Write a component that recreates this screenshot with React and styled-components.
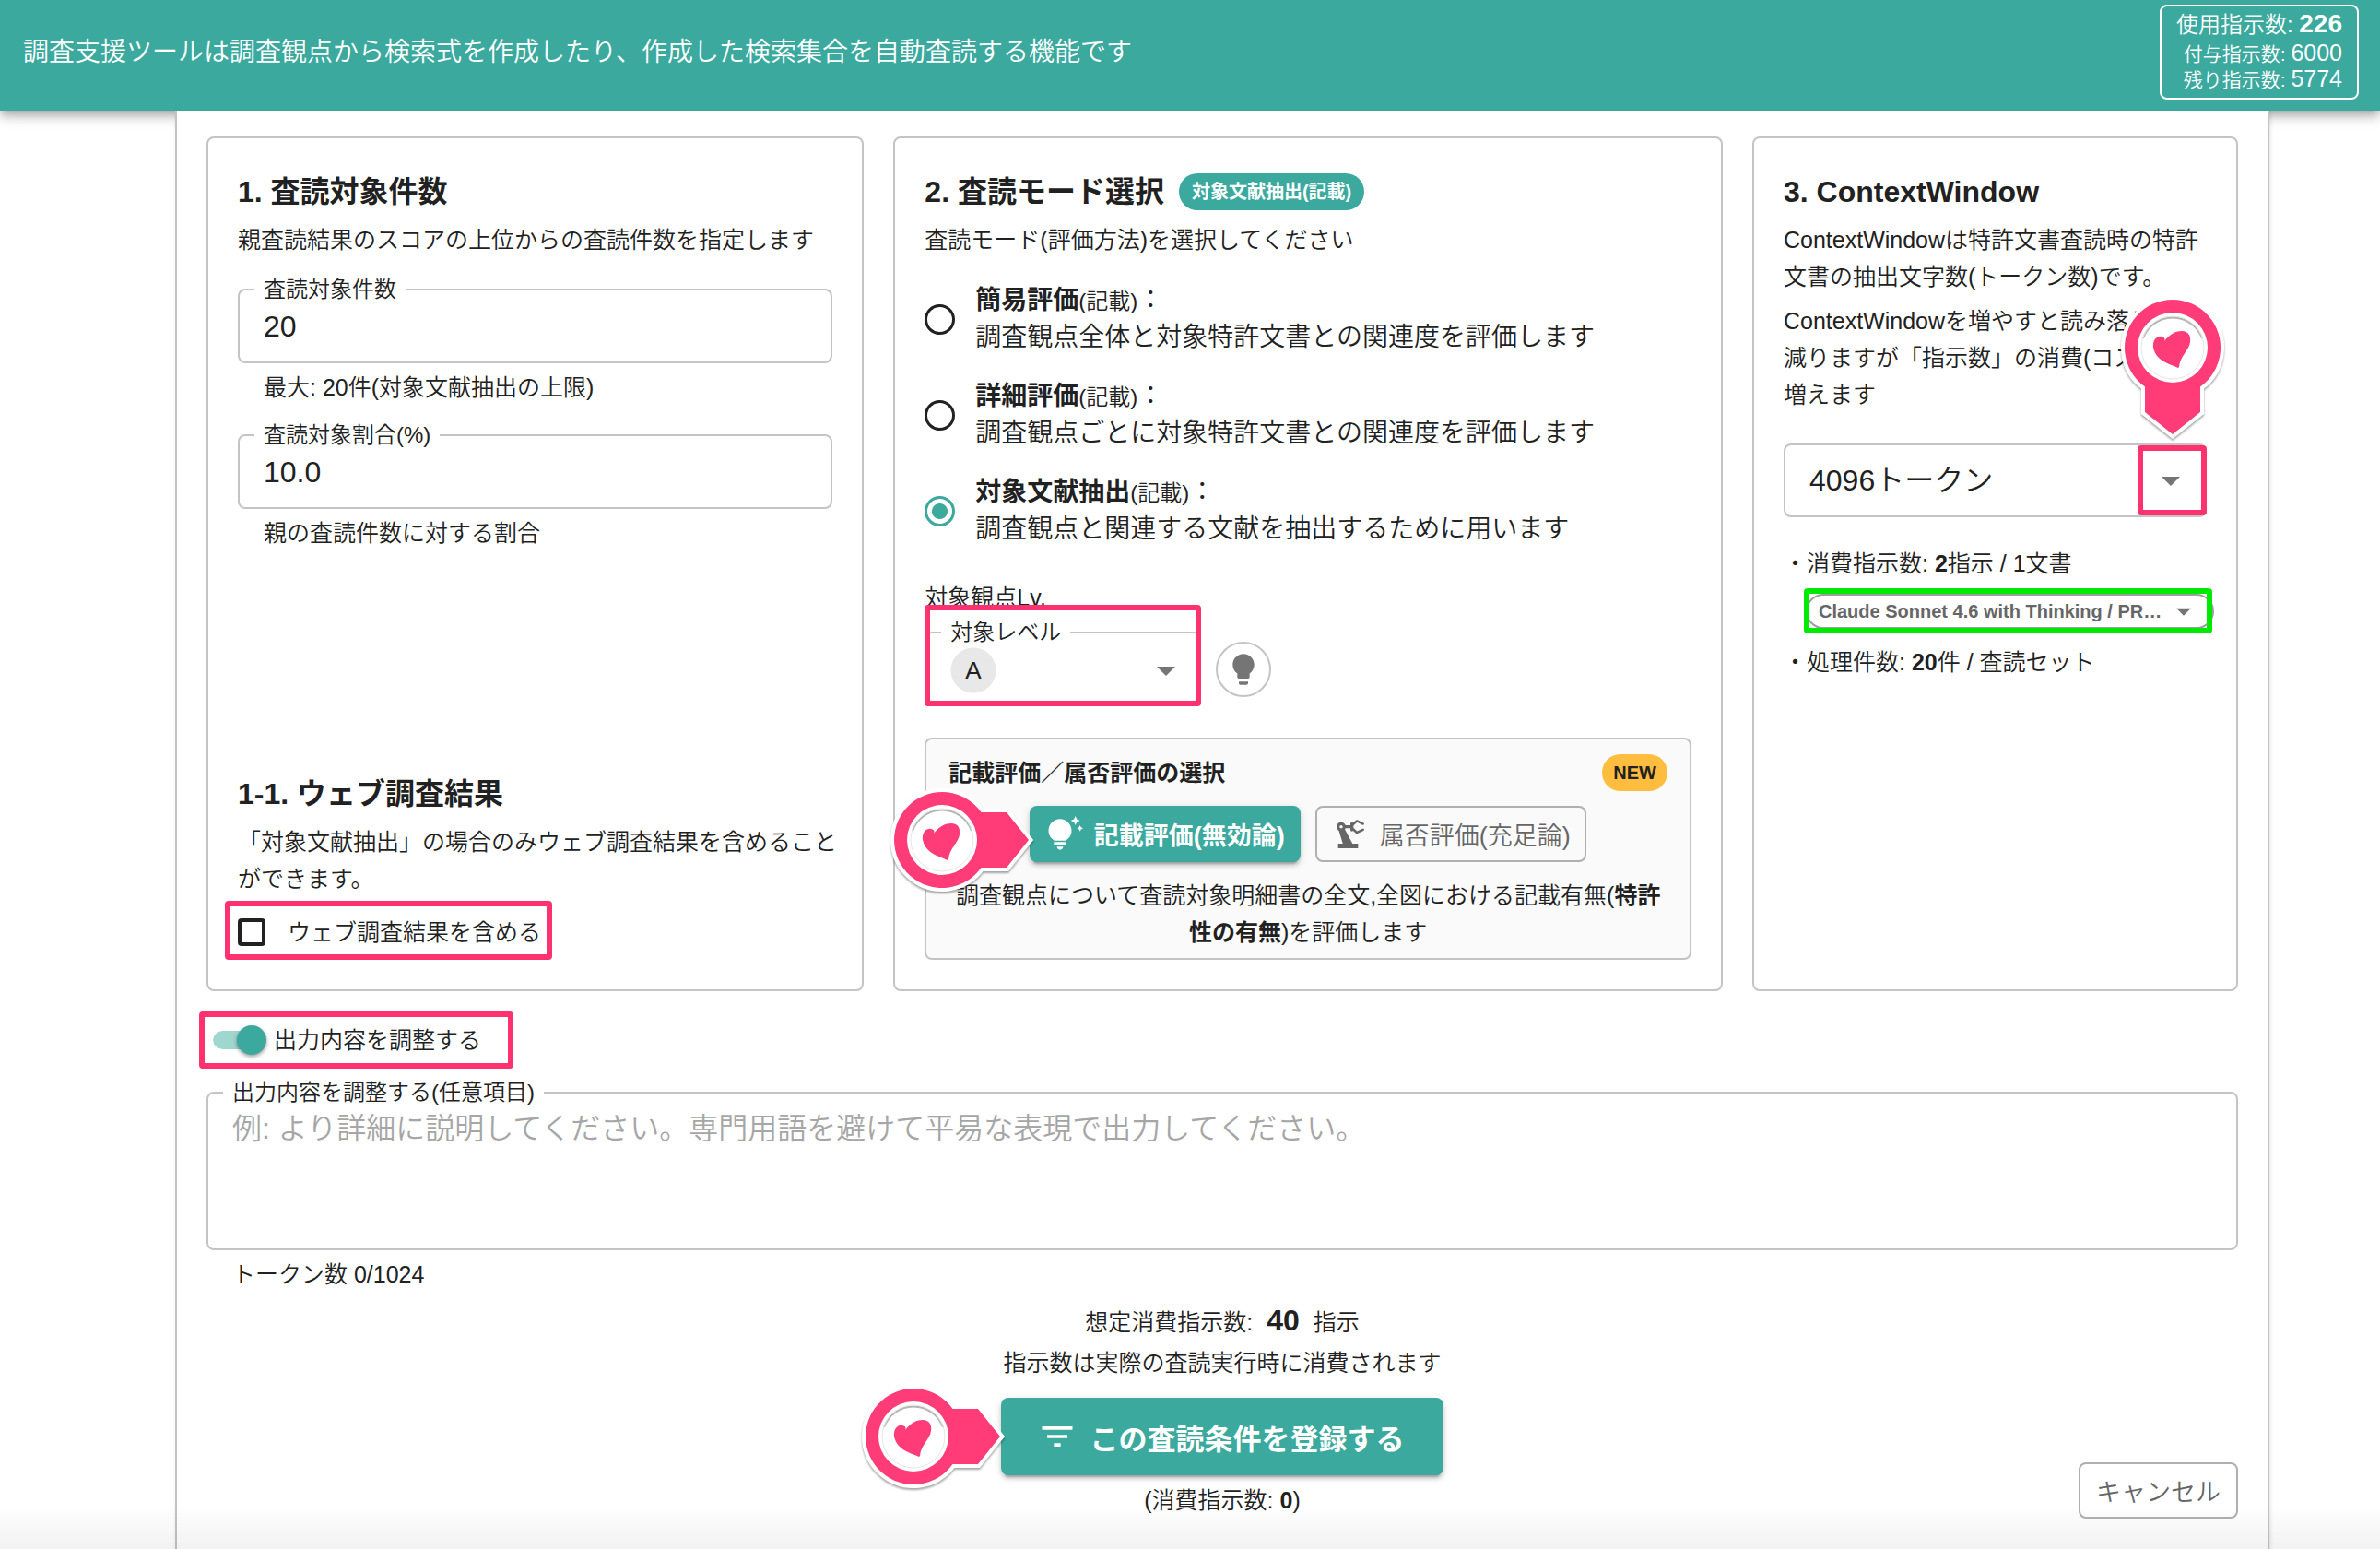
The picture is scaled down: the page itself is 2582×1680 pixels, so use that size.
import React, { useState } from "react";
import styled, { createGlobalStyle, css } from "styled-components";
import {
  MdArrowDropDown,
  MdFilterList,
  MdLightbulb,
  MdPrecisionManufacturing,
  MdTipsAndUpdates,
} from "react-icons/md";

const teal = "#3ba99e";
const pink = "#ff3270";
const ink = "#212121";
const line = "#c4c4c4";

const GlobalStyle = createGlobalStyle`
  * {
    box-sizing: border-box;
  }
  body {
    margin: 0;
    background: #fff;
    color: ${ink};
    font-family: "Liberation Sans", "Noto Sans CJK JP", sans-serif;
    font-size: 25px;
    font-weight: 350;
    line-height: 40px;
  }
  button, input, select, textarea {
    font-family: inherit;
    font-weight: inherit;
    color: inherit;
  }
  b {
    font-weight: 700;
  }
`;

const Header = styled.header`
  display: flex;
  justify-content: space-between;
  align-items: flex-start;
  height: 120px;
  padding: 5px 23px 0 25px;
  background: ${teal};
  color: #fff;
  box-shadow: 0 4px 8px -2px rgba(0, 0, 0, 0.2), 0 8px 10px rgba(0, 0, 0, 0.14),
    0 2px 20px rgba(0, 0, 0, 0.12);
`;

const Lead = styled.p`
  margin: 32px 0 0;
  font-size: 28px;
`;

const Usage = styled.div`
  padding: 2px 16px 6px;
  border: 2px solid #fff;
  border-radius: 8px;
  text-align: right;
  font-size: 24px;
  line-height: 34px;
  b {
    font-size: 28px;
  }
`;

const UsageSub = styled.div`
  font-size: 21px;
  line-height: 26px;
  span {
    font-size: 25px;
  }
`;

const Shell = styled.main`
  min-height: calc(100vh - 120px);
  margin: 0 120px 0 190px;
  padding: 28px 32px 28px;
  border: solid ${line};
  border-width: 0 2px;
  background: #fff;
  box-shadow: 1px 2px 4px rgba(0, 0, 0, 0.12);
`;

const BottomFade = styled.div`
  position: fixed;
  left: 0;
  right: 0;
  bottom: 0;
  height: 48px;
  pointer-events: none;
  background: linear-gradient(rgba(0, 0, 0, 0), rgba(0, 0, 0, 0.05));
`;

const Cards = styled.div`
  display: grid;
  grid-template-columns: repeat(12, minmax(0, 1fr));
  gap: 32px;
`;

const Card = styled.section`
  grid-column: span ${(p) => p.$span};
  display: flex;
  flex-direction: column;
  padding: 32px;
  border: 2px solid ${line};
  border-radius: 8px;
`;

const Title = styled.h2`
  display: flex;
  align-items: center;
  gap: 16px;
  margin: 0 0 6px;
  font-size: 32px;
  line-height: 52px;
`;

const Text = styled.p`
  margin: 0 0 8px;
  text-align: ${(p) => (p.$center ? "center" : "left")};
`;

const Badge = styled.span`
  padding: 0 ${(p) => (p.$amber ? 12 : 14)}px;
  border-radius: 20px;
  background: ${(p) => (p.$amber ? "#ffbd3f" : teal)};
  color: ${(p) => (p.$amber ? ink : "#fff")};
  font-size: 20px;
  font-weight: bold;
  line-height: 40px;
`;

const Outline = styled.fieldset`
  min-width: 0;
  margin: ${(p) => (p.$tight ? 0 : "10px 0 0")};
  padding: 0 16px ${(p) => (p.$tight ? 8 : 14)}px;
  border: 2px solid ${line};
  border-radius: 8px;
  legend {
    padding: 0 10px;
    font-size: 24px;
    line-height: 32px;
  }
`;

const TextInput = styled.input`
  display: block;
  width: 100%;
  height: 48px;
  padding: 0 10px;
  border: 0;
  outline: 0;
  background: none;
  font-size: 32px;
`;

const TextArea = styled.textarea`
  display: block;
  width: 100%;
  height: 145px;
  padding: 0 10px;
  border: 0;
  outline: 0;
  resize: none;
  background: none;
  font-size: 32px;
  line-height: 46px;
  &::placeholder {
    color: #a6a6a6;
  }
`;

const Helper = styled.p`
  margin: 6px 28px;
`;

const Lower = styled.div`
  margin-top: auto;
  margin-right: -8px;
`;

// coloured frame laid over a control to point it out
const Marked = styled.div`
  position: relative;
  &::after {
    content: "";
    position: absolute;
    inset: ${(p) => p.$inset};
    border: 6px solid ${(p) => p.$color || pink};
    border-radius: 4px;
    pointer-events: none;
  }
`;

const CheckRow = styled.label`
  display: flex;
  align-items: center;
  height: 60px;
  gap: 24px;
`;

const CheckBox = styled.input`
  appearance: none;
  width: 30px;
  height: 30px;
  margin: 0;
  border: 4px solid ${ink};
  border-radius: 4px;
  &:checked {
    background: ${teal};
  }
`;

const Fit = styled(Marked)`
  width: fit-content;
`;

const Options = styled.div`
  display: flex;
  flex-direction: column;
  gap: 24px;
  margin: 18px 0 34px;
`;

const Option = styled.label`
  display: flex;
  align-items: center;
  gap: 22px;
  font-size: 28px;
  small {
    font-size: 24px;
    line-height: 1;
  }
`;

const Radio = styled.input`
  appearance: none;
  flex: none;
  width: 33px;
  height: 33px;
  margin: 0;
  border: 3px solid ${ink};
  border-radius: 50%;
  &:checked {
    border-color: ${teal};
    background: radial-gradient(${teal} 8px, transparent 9px);
  }
`;

const LevelRow = styled.div`
  display: flex;
  align-items: flex-end;
  gap: 16px;
  margin: 2px 0 38px;
`;

const LevelBox = styled(Marked)`
  width: 300px;
`;

const SelectWrap = styled.div`
  position: relative;
  display: flex;
  align-items: center;
  svg {
    position: absolute;
    right: ${(p) => p.$arrow}px;
    color: #757575;
    pointer-events: none;
  }
`;

const selectBase = css`
  appearance: none;
  width: 100%;
  margin: 0;
  outline: 0;
  text-overflow: ellipsis;
`;

// round chip is drawn under the chosen level
const LevelSelect = styled.select`
  ${selectBase}
  height: 50px;
  padding: 0 26px;
  border: 0;
  background: radial-gradient(circle at 35px 25px, #e8e8e8 24px, transparent 25px);
  font-size: 26px;
`;

const TokenSelect = styled.select`
  ${selectBase}
  height: 80px;
  padding: 0 80px 0 26px;
  border: 2px solid ${line};
  border-radius: 8px;
  background: #fff;
  font-size: 32px;
`;

const ModelSelect = styled.select`
  ${selectBase}
  height: 38px;
  padding: 0 44px 0 12px;
  border: 2px solid #9e9e9e;
  border-radius: 19px;
  background: #fff;
  color: #666;
  font-size: 20px;
  font-weight: bold;
`;

const HintButton = styled.button`
  display: grid;
  place-items: center;
  width: 60px;
  height: 60px;
  margin-bottom: 6px;
  padding: 0;
  border: 2px solid ${line};
  border-radius: 50%;
  background: #fff;
  color: #757575;
`;

const Panel = styled.div`
  padding: 16px 24px 0;
  border: 2px solid ${line};
  border-radius: 8px;
  background: #fafafa;
`;

const PanelHead = styled.div`
  display: flex;
  justify-content: space-between;
  font-weight: bold;
`;

const Choices = styled.div`
  display: flex;
  justify-content: center;
  gap: 16px;
  margin: 16px 0;
`;

const PinAnchor = styled.div`
  position: relative;
`;

const Button = styled.button`
  display: flex;
  align-items: center;
  justify-content: center;
  gap: 12px;
  height: 61px;
  min-width: ${(p) => (p.$wide ? "294px" : "0")};
  padding: 0 ${(p) => (p.$wide ? 12 : 17)}px;
  border: 2px solid #b0b0b0;
  border-radius: 8px;
  background: none;
  color: #666;
  font-size: 27px;
  ${(p) =>
    p.$filled &&
    css`
      border: 0;
      background: ${teal};
      color: #fff;
      font-weight: bold;
      box-shadow: 0 6px 2px -4px rgba(0, 0, 0, 0.2), 0 4px 4px rgba(0, 0, 0, 0.14),
        0 2px 10px rgba(0, 0, 0, 0.12);
    `}
`;

const SubmitButton = styled(Button)`
  gap: 14px;
  height: 84px;
  width: 480px;
  padding: 0 20px 0 16px;
  font-size: 31px;
`;

const TokenBox = styled(Marked)`
  margin: 25px 0 30px;
`;

const ModelBox = styled(Marked)`
  margin: 13px -8px 16px 24px;
`;

const SwitchRow = styled(Fit)`
  margin: 33px 0 21px;
  label {
    display: flex;
    align-items: center;
    gap: 8px;
    padding-left: 7px;
  }
`;

const Switch = styled.input`
  appearance: none;
  position: relative;
  width: 58px;
  height: 20px;
  margin: 0;
  border-right: 6px solid transparent;
  border-radius: 10px;
  background: #a0d6d0;
  background-clip: padding-box;
  &::after {
    content: "";
    position: absolute;
    top: -6px;
    right: -6px;
    width: 32px;
    height: 32px;
    border-radius: 50%;
    background: ${teal};
    box-shadow: 0 2px 4px rgba(0, 0, 0, 0.4);
  }
  &:not(:checked)::after {
    right: 26px;
    background: #fff;
  }
`;

const Footer = styled.footer`
  display: grid;
  grid-template-columns: 1fr auto 1fr;
  align-items: end;
`;

const Submit = styled.div`
  grid-column: 2;
  display: flex;
  flex-direction: column;
  align-items: center;
`;

const Estimate = styled.div`
  line-height: 48px;
  b {
    margin: 0 8px;
    font-size: 32px;
  }
`;

const SubmitAnchor = styled(PinAnchor)`
  margin: 18px 0 7px;
`;

const Cancel = styled(Button)`
  justify-self: end;
`;

const PinSvg = styled.svg`
  position: absolute;
  z-index: 1;
  overflow: visible;
  pointer-events: none;
  filter: drop-shadow(0 2px 1px rgba(0, 0, 0, 0.35));
  ${(p) =>
    p.$down
      ? css`
          right: -23px;
          bottom: 100%;
        `
      : css`
          right: calc(100% - 9px);
          top: ${p.$low ? "-23px" : "-18px"};
        `}
`;

const Pin = ({ down, low }) => (
  <PinSvg
    $down={down}
    $low={low}
    width={down ? 120 : 164}
    height={down ? 164 : 120}
    viewBox={down ? "-60 -60 120 164" : "-60 -60 164 120"}
    aria-hidden="true"
  >
    <path
      transform={down ? undefined : "rotate(-90)"}
      d="M-30 42.5A52 52 0 1 1 30 42.5V70L0 94L-30 70Z"
      fill="#ff3c78"
      stroke="#fff"
      strokeWidth="8"
      paintOrder="stroke"
    />
    <circle r="38" fill="#fff" />
    <path d="M-32 -10A34 34 0 0 1 32 -10" fill="none" stroke="#b5b5b5" strokeWidth="2" />
    <circle r="34" fill="none" stroke="#e6e6e6" strokeWidth="1" />
    <path
      d="M6 22C-2 18 -18 15 -21 0C-22 -8 -17 -13 -12 -12C-8 -11 -8 -9 -9 -7C-3 -15 4 -18 10 -18C17 -18 20 -13 19 -6C18 3 8 9 7 21Z"
      fill="#ff3c78"
    />
  </PinSvg>
);

const modes = [
  { id: "simple", name: "簡易評価", text: "調査観点全体と対象特許文書との関連度を評価します" },
  { id: "detail", name: "詳細評価", text: "調査観点ごとに対象特許文書との関連度を評価します" },
  { id: "extract", name: "対象文献抽出", text: "調査観点と関連する文献を抽出するために用います" },
];

const App = () => {
  const [mode, setMode] = useState("extract");
  const [count, setCount] = useState("20");
  const [ratio, setRatio] = useState("10.0");

  return (
    <>
      <GlobalStyle />
      <Header>
        <Lead>調査支援ツールは調査観点から検索式を作成したり、作成した検索集合を自動査読する機能です</Lead>
        <Usage>
          使用指示数: <b>226</b>
          <UsageSub>
            付与指示数: <span>6000</span>
          </UsageSub>
          <UsageSub>
            残り指示数: <span>5774</span>
          </UsageSub>
        </Usage>
      </Header>

      <Shell>
        <Cards>
          <Card $span={4}>
            <Title>1. 査読対象件数</Title>
            <Text>親査読結果のスコアの上位からの査読件数を指定します</Text>
            <Outline>
              <legend>
                <label htmlFor="count">査読対象件数</label>
              </legend>
              <TextInput id="count" value={count} onChange={(e) => setCount(e.target.value)} />
            </Outline>
            <Helper>最大: 20件(対象文献抽出の上限)</Helper>
            <Outline>
              <legend>
                <label htmlFor="ratio">査読対象割合(%)</label>
              </legend>
              <TextInput id="ratio" value={ratio} onChange={(e) => setRatio(e.target.value)} />
            </Outline>
            <Helper>親の査読件数に対する割合</Helper>

            <Lower>
              <Title>1-1. ウェブ調査結果</Title>
              <Text>「対象文献抽出」の場合のみウェブ調査結果を含めることができます。</Text>
              <Fit $inset="-4px -12px 0 -14px">
                <CheckRow>
                  <CheckBox type="checkbox" />
                  ウェブ調査結果を含める
                </CheckRow>
              </Fit>
            </Lower>
          </Card>

          <Card $span={5}>
            <Title>
              2. 査読モード選択 <Badge>対象文献抽出(記載)</Badge>
            </Title>
            <Text>査読モード(評価方法)を選択してください</Text>
            <Options>
              {modes.map((m) => (
                <Option key={m.id}>
                  <Radio
                    type="radio"
                    name="mode"
                    checked={mode === m.id}
                    onChange={() => setMode(m.id)}
                  />
                  <span>
                    <b>{m.name}</b>
                    <small>(記載)</small>：<br />
                    {m.text}
                  </span>
                </Option>
              ))}
            </Options>
            <div>対象観点Lv.</div>
            <LevelRow>
              <LevelBox $inset="-14px 0 -4px 0">
                <Outline $tight>
                  <legend>
                    <label htmlFor="level">対象レベル</label>
                  </legend>
                  <SelectWrap $arrow={-4}>
                    <LevelSelect id="level">
                      <option>A</option>
                    </LevelSelect>
                    <MdArrowDropDown size={48} />
                  </SelectWrap>
                </Outline>
              </LevelBox>
              <HintButton aria-label="ヒント">
                <MdLightbulb size={40} />
              </HintButton>
            </LevelRow>

            <Panel>
              <PanelHead>
                記載評価／属否評価の選択 <Badge $amber>NEW</Badge>
              </PanelHead>
              <Choices>
                <PinAnchor>
                  <Pin low />
                  <Button $filled $wide>
                    <MdTipsAndUpdates size={40} />
                    記載評価(無効論)
                  </Button>
                </PinAnchor>
                <Button $wide>
                  <MdPrecisionManufacturing size={40} />
                  属否評価(充足論)
                </Button>
              </Choices>
              <Text $center>
                調査観点について査読対象明細書の全文,全図における記載有無(<b>特許</b>
                <b>性の有無</b>)を評価します
              </Text>
            </Panel>
          </Card>

          <Card $span={3}>
            <Title>3. ContextWindow</Title>
            <Text>ContextWindowは特許文書査読時の特許文書の抽出文字数(トークン数)です。</Text>
            <Text>ContextWindowを増やすと読み落としは減りますが「指示数」の消費(コスト)が増えます</Text>
            <TokenBox $inset="2px 0 2px calc(100% - 75px)">
              <Pin down />
              <SelectWrap $arrow={15}>
                <TokenSelect aria-label="ContextWindow">
                  <option>4096トークン</option>
                </TokenSelect>
                <MdArrowDropDown size={48} />
              </SelectWrap>
            </TokenBox>
            <div>
              ・消費指示数: <b>2</b>指示 / 1文書
            </div>
            <ModelBox $color="#00ea00" $inset="-6px 2px -5px -2px">
              <SelectWrap $arrow={14}>
                <ModelSelect aria-label="モデル">
                  <option>Claude Sonnet 4.6 with Thinking / PR…</option>
                </ModelSelect>
                <MdArrowDropDown size={38} />
              </SelectWrap>
            </ModelBox>
            <div>
              ・処理件数: <b>20</b>件 / 査読セット
            </div>
          </Card>
        </Cards>

        <SwitchRow $inset="-11px -35px -11px -8px">
          <label>
            <Switch type="checkbox" role="switch" defaultChecked />
            出力内容を調整する
          </label>
        </SwitchRow>
        <Outline $tight>
          <legend>
            <label htmlFor="note">出力内容を調整する(任意項目)</label>
          </legend>
          <TextArea
            id="note"
            placeholder="例: より詳細に説明してください。専門用語を避けて平易な表現で出力してください。"
          />
        </Outline>
        <Helper>トークン数 0/1024</Helper>

        <Footer>
          <Submit>
            <Estimate>
              想定消費指示数: <b>40</b> 指示
            </Estimate>
            <div>指示数は実際の査読実行時に消費されます</div>
            <SubmitAnchor>
              <Pin />
              <SubmitButton $filled>
                <MdFilterList size={44} />
                この査読条件を登録する
              </SubmitButton>
            </SubmitAnchor>
            <div>
              (消費指示数: <b>0</b>)
            </div>
          </Submit>
          <Cancel>キャンセル</Cancel>
        </Footer>
      </Shell>
      <BottomFade />
    </>
  );
};

export default App;
